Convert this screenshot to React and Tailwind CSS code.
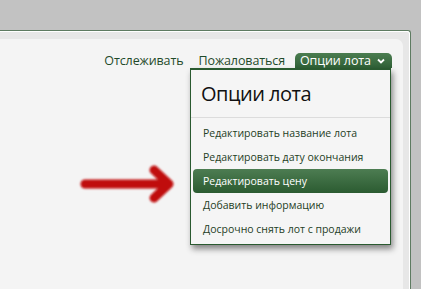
export default function App() {
  const items = [
    "Редактировать название лота",
    "Редактировать дату окончания",
    "Редактировать цену",
    "Добавить информацию",
    "Досрочно снять лот с продажи",
  ];
  return (
    <div
      className="relative w-[421px] h-[289px] overflow-hidden bg-[#c2c2c2] pt-[30px]"
      style={{ fontFamily: '"Open Sans", Verdana, sans-serif' }}
    >
      <div className="mr-[10px] h-[300px] border-t border-r border-[#5e7b61] bg-[#e7e7e7] pt-[8px] pr-[7px] rounded-tr-[3px] shadow-[inset_-1px_1px_0_#ffffff]">
        <div className="relative h-full bg-[#f4f4f4] rounded-tr-[7px]">
          <div className="flex items-end justify-end pt-[14px] pr-[11px]">
            <span className="text-[12.5px] tracking-[-0.1px] leading-[15px] text-[#1f4a2a] mr-[15px]">Отслеживать</span>
            <span className="text-[12.5px] tracking-[-0.1px] leading-[15px] text-[#1f4a2a] mr-[10px]">Пожаловаться</span>
            <div className="flex h-[15px] w-[97px] items-center rounded-t-[5px] bg-gradient-to-b from-[#4b7d50] to-[#2f6036] pl-[5px] text-[12.5px] tracking-[-0.1px] text-white">
              <span className="leading-[15px]">Опции лота</span>
              <svg width="8" height="6" viewBox="0 0 8 6" className="ml-[6px] mt-[1px]">
                <path d="M1 1.5 L4 4.5 L7 1.5" stroke="white" strokeWidth="1.8" fill="none" />
              </svg>
            </div>
          </div>
          <div className="absolute left-[190px] top-[29px] w-[201px] border border-t-[2px] border-[#2a5a30] bg-[#f5f5f5] shadow-[2px_4px_6px_rgba(0,0,0,0.45)]">
            <div className="h-[48px] border-b border-[#dcdcdc] pl-[10px] pt-[12px] text-[20px] tracking-[-0.5px] leading-[24px] text-[#111]">
              Опции лота
            </div>
            <div className="px-[2px] pt-[3px] pb-[3px]">
              {items.map((t, i) =>
                i === 2 ? (
                  <div
                    key={i}
                    className="h-[24px] rounded-[4px] bg-gradient-to-b from-[#4d7d52] to-[#2b5b31] pl-[10px] text-[10.5px] leading-[24px] text-white"
                  >
                    {t}
                  </div>
                ) : (
                  <div key={i} className="h-[24px] pl-[10px] text-[10.5px] leading-[24px] text-[#1f4025]">
                    {t}
                  </div>
                )
              )}
            </div>
          </div>
        </div>
      </div>
      <svg
        className="absolute left-[74px] top-[160px]"
        width="106"
        height="50"
        viewBox="0 0 106 50"
      >
        <defs>
          <filter id="b" x="-20%" y="-40%" width="140%" height="180%">
            <feGaussianBlur stdDeviation="1.3" />
          </filter>
        </defs>
        <g filter="url(#b)" stroke="#c00a0a" strokeWidth="9" strokeLinecap="round" strokeLinejoin="round" fill="none">
          <path d="M11 24 L93 24" />
          <path d="M80 10 L95 24 L80 38" />
        </g>
      </svg>
    </div>
  );
}
